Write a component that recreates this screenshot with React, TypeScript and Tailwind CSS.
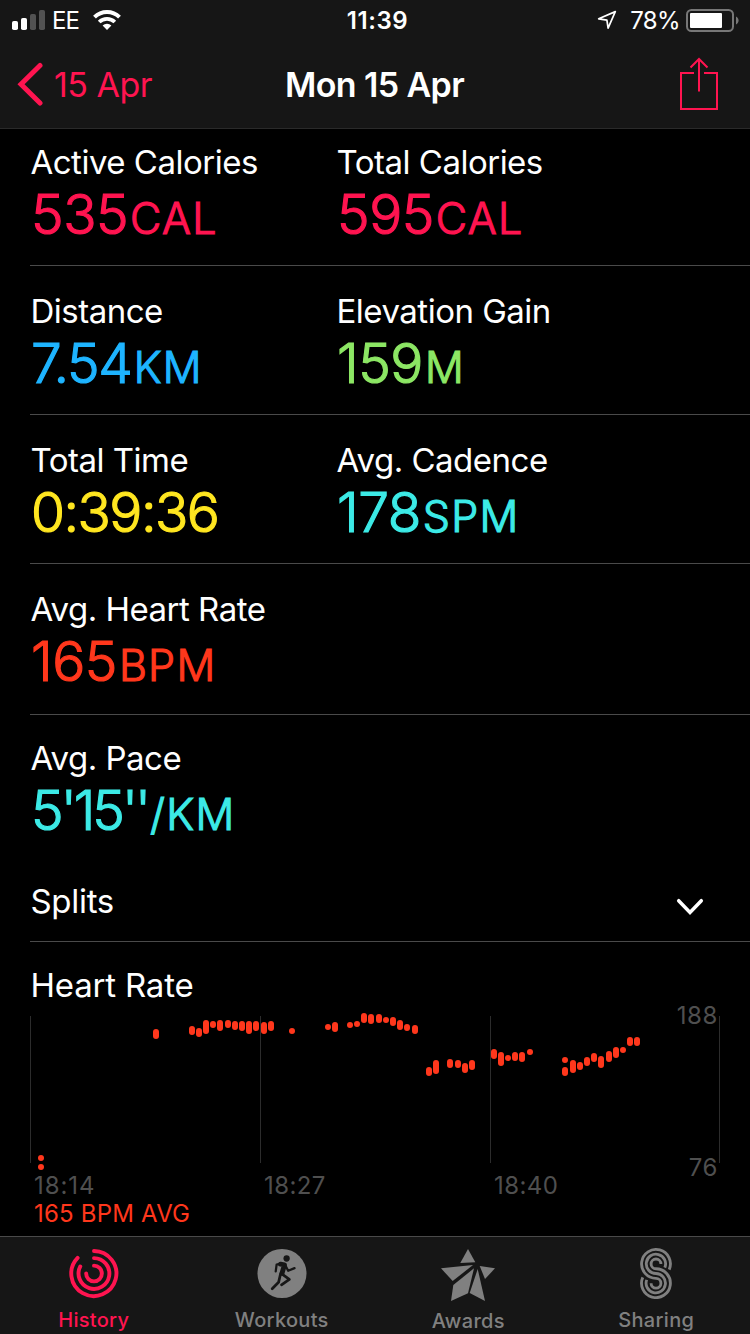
import { type ReactNode } from "react";

type Metric = {
  label: string;
  value: string;
  unit?: string;
  color: string;
  tracking?: string;
};

type Sample = [x: number, top: number, bottom: number];

const metricRows: { className: string; metrics: Metric[] }[] = [
  {
    className: "h-[137px] pt-[13px] border-b",
    metrics: [
      { label: "Active Calories", value: "535", unit: "CAL", color: "text-[#ff1450]" },
      { label: "Total Calories", value: "595", unit: "CAL", color: "text-[#ff1450]" },
    ],
  },
  {
    className: "h-[149px] pt-[25px] border-b",
    metrics: [
      { label: "Distance", value: "7.54", unit: "KM", color: "text-[#1eb4ff]", tracking: "tracking-[-1.3px]" },
      { label: "Elevation Gain", value: "159", unit: "M", color: "text-[#8ce664]" },
    ],
  },
  {
    className: "h-[149px] pt-[25px] border-b",
    metrics: [
      { label: "Total Time", value: "0:39:36", color: "text-[#ffe620]", tracking: "tracking-[-1.5px]" },
      { label: "Avg. Cadence", value: "178", unit: "SPM", color: "text-[#3ceae6]" },
    ],
  },
  {
    className: "h-[151px] pt-[25px] border-b",
    metrics: [{ label: "Avg. Heart Rate", value: "165", unit: "BPM", color: "text-[#ff371c]" }],
  },
  {
    className: "h-[125px] pt-[23px]",
    metrics: [
      { label: "Avg. Pace", value: "5'15''", unit: "/KM", color: "text-[#3ceae6]", tracking: "tracking-[-3px]" },
    ],
  },
];

// x, top and bottom of every range bar
const heartRate: Sample[] = [
  [41, 139, 145], [41, 148, 154], [156, 13, 23], [192, 10, 19], [199, 12, 21],
  [206, 4, 18], [213, 5, 12], [220, 4, 15], [228, 4, 12], [235, 5, 14],
  [242, 5, 15], [249, 5, 18], [256, 5, 15], [264, 6, 18], [271, 5, 15],
  [292, 12, 18], [328, 8, 14], [335, 6, 16], [350, 6, 12], [357, 5, 11],
  [364, -3, 7], [371, -2, 8], [379, -2, 7], [386, 1, 7], [393, 1, 10],
  [400, 4, 14], [407, 8, 15], [415, 9, 18], [429, 51, 60], [436, 44, 58],
  [450, 43, 52], [458, 44, 52], [465, 47, 57], [472, 44, 54], [494, 33, 43],
  [501, 36, 50], [508, 39, 45], [515, 36, 45], [522, 36, 46], [530, 33, 39],
  [565, 41, 47], [565, 51, 60], [573, 44, 57], [580, 46, 54], [587, 41, 50],
  [594, 37, 46], [601, 40, 52], [609, 35, 46], [616, 31, 42], [623, 31, 37],
  [630, 21, 30], [637, 21, 30],
];

const StatusBar = () => (
  <div className="flex h-10 items-center justify-between pl-3 pr-[11px] text-[24px] leading-10">
    <div className="flex flex-1 items-center">
      <svg width="33" height="20" viewBox="0 0 33 20" fill="#fff">
        <rect x="0" y="11" width="6" height="9" rx="1.8" />
        <rect x="9" y="8" width="6" height="12" rx="1.8" />
        <rect x="18" y="4" width="6" height="16" rx="1.8" fill="#525252" />
        <rect x="27" y="0" width="6" height="20" rx="1.8" fill="#525252" />
      </svg>
      <span className="ml-[7px] pt-[2px] tracking-[-0.9px]">EE</span>
      <svg className="ml-[14px]" width="28" height="20" viewBox="0 0 28 20" fill="none" stroke="#fff">
        <path d="M1.5 7.2a17.8 17.8 0 0 1 25 0" strokeWidth="4" />
        <path d="M6.2 12a11.1 11.1 0 0 1 15.6 0" strokeWidth="3.8" />
        <path d="M14 20l-4.4-4.4a6.3 6.3 0 0 1 8.8 0z" fill="#fff" stroke="none" />
      </svg>
    </div>
    <span className="pt-[2px] pl-1 font-semibold tracking-[0.6px]">11:39</span>
    <div className="flex flex-1 items-center justify-end">
      <svg width="20" height="20" viewBox="0 0 20 20" fill="none" stroke="#fff" strokeWidth="1.7" strokeLinejoin="round">
        <path d="M18.3 1.6L1.7 8.8l8.2 1.4 1.2 8z" />
      </svg>
      <span className="ml-[13px] pt-[2px] tracking-[-0.6px]">78%</span>
      <svg className="ml-[6px]" width="53" height="23" viewBox="0 0 53 23">
        <rect x="1" y="1" width="46" height="21" rx="4.5" fill="none" stroke="#777" strokeWidth="2" />
        <rect x="4" y="4" width="32" height="15" rx="1" fill="#fff" />
        <path d="M50 7.5c3.4 1.8 3.4 6.200 0 8z" fill="#777" />
      </svg>
    </div>
  </div>
);

const NavBar = () => (
  <div className="grid h-[88px] grid-cols-3 items-center pl-[17px] pr-[31px] text-[34px]">
    <div className="flex items-center text-[#ff1450]">
      <svg width="27" height="44" viewBox="0 0 27 44" fill="none" stroke="currentColor" strokeWidth="5" strokeLinecap="round">
        <path d="M23 3.500L4 22.200l19 18.800" />
      </svg>
      <span className="ml-[10px] tracking-[-0.5px] whitespace-nowrap">15 Apr</span>
    </div>
    <h1 className="pl-[13px] text-center font-semibold tracking-[-0.6px] whitespace-nowrap">Mon 15 Apr</h1>
    <svg className="justify-self-end text-[#ff1450]" width="40" height="54" viewBox="0 0 40 54" fill="none" stroke="currentColor" strokeWidth="2">
      <path d="M15 16H2v36h36V16H25" />
      <path d="M20 34.500V2M11.500 10.500L20 2l8.500 8.500" />
    </svg>
  </div>
);

const MetricCell = ({ label, value, unit, color, tracking = "tracking-[-0.5px]" }: Metric) => (
  <div className="w-[306px] shrink-0">
    <div className="pl-[0.5px] text-[33px] leading-10 tracking-[-0.5px] whitespace-nowrap">{label}</div>
    <div
      className={`flex h-16 items-baseline pl-px text-[55px] leading-[64px] font-light whitespace-nowrap [stroke-linejoin:round] [-webkit-text-stroke:1.2px_currentColor] ${color}`}
    >
      <span className={tracking}>{value}</span>
      {unit && <span className="ml-[2px] text-[43px] leading-none tracking-[1.3px]">{unit}</span>}
    </div>
  </div>
);

const HeartRateChart = () => (
  <div className="relative">
    <svg className="-ml-[30px] block overflow-visible" width="750" height="156" viewBox="0 0 750 156">
      {[30, 260, 490, 719].map(x => (
        <rect key={x} x={x} y="0" width="1" height="147" fill="#2c2c2c" />
      ))}
      {heartRate.map(([x, top, bottom]) => (
        <rect key={`${x}-${top}`} x={x - 3} y={top} width="6" height={bottom - top} rx="3" fill="#ff371c" />
      ))}
    </svg>
    <span className="absolute -top-[16px] right-[32px] text-[24px] leading-8 tracking-[0.6px] text-[#4f4f4f]">188</span>
    <span className="absolute top-[136px] right-[32px] text-[24px] leading-8 tracking-[0.6px] text-[#4f4f4f]">76</span>
    <div className="flex pl-1 text-[24px] leading-7 text-[#4f4f4f]">
      <span className="w-[230px] tracking-[0.9px]">18:14</span>
      <span className="w-[230px] tracking-[0.4px]">18:27</span>
      <span className="tracking-[0.4px]">18:40</span>
    </div>
    <div className="pl-1 text-[24px] leading-7 tracking-[0.2px] text-[#ff371c]">165 BPM AVG</div>
  </div>
);

const RingsIcon = () => (
  <svg width="50" height="52" viewBox="0 0 50 52" fill="none" stroke="currentColor" strokeWidth="4" strokeLinecap="round">
    <path d="M25 3a23 23 0 1 1-16.700 7" />
    <path d="M25 10.300a15.700 15.700 0 1 1-14 8.500" />
    <path d="M25 18a8 8 0 1 1-8 8" />
  </svg>
);

const RunnerIcon = () => (
  <svg width="50" height="52" viewBox="0 -1 50 52" fill="none" stroke="#161616" strokeWidth="2.300" strokeLinecap="round" strokeLinejoin="round">
    <circle cx="25" cy="25" r="25" fill="#808080" stroke="none" />
    <circle cx="29.700" cy="9.700" r="3.200" fill="#161616" stroke="none" />
    <path d="M23.500 15.500l4 .8-2.500 8.500" strokeWidth="5" />
    <path d="M23.500 15l-4 .9-.9 7M28.500 16.800l2.800 5.400 6.500-2.700" />
    <path d="M25.500 26l7 5-8 5.500" strokeWidth="2.800" />
    <path d="M23.500 25.500l-2 8.500-6.500 6.500" strokeWidth="2.800" />
  </svg>
);

const StarIcon = () => (
  <svg className="overflow-visible" width="54" height="52" viewBox="0 -1 54 52" fill="currentColor">
    <path d="M27 0l7.300 13.300-15 .700z" />
    <path d="M0 19.300L32 16 11.700 32z" />
    <path d="M33 19.300l-6 25L10 52l2.300-16z" />
    <path d="M36.700 20L44 52l-15.300-8z" />
    <path d="M38.700 17l15.300 2.300L44 30z" />
  </svg>
);

const SharingIcon = () => (
  <svg width="34" height="52" viewBox="0 0 34 52" fill="none" stroke="currentColor" strokeWidth="2.900">
    <path d="M30.500 22A14.700 14.700 0 1 0 17 30.900A5 5 0 1 1 12 35.900" />
    <path d="M26 20A9.850 9.850 0 1 0 17 26A9.850 9.850 0 1 1 7.500 32.500" />
    <path d="M22 16.200A5 5 0 1 0 17 21.200A14.700 14.700 0 1 1 3.500 30" />
  </svg>
);

const Tab = ({ label, className, children }: { label: string; className: string; children: ReactNode }) => (
  <button className={`flex w-1/4 flex-col items-center pt-[11px] ${className}`}>
    {children}
    <span className="mt-[7px] text-[20px] leading-7 font-medium tracking-[0.3px]">{label}</span>
  </button>
);

export default function App() {
  return (
    <div className="flex h-[1334px] w-[750px] flex-col overflow-hidden bg-black font-['Inter',sans-serif] text-white">
      <header className="h-[129px] shrink-0 border-b border-[#2a2a2a] bg-[#161616]">
        <StatusBar />
        <NavBar />
      </header>

      <main className="min-h-0 flex-1 pl-[30px]">
        {metricRows.map(row => (
          <section key={row.metrics[0].label} className={`flex border-[#4a4a4a] ${row.className}`}>
            {row.metrics.map(metric => (
              <MetricCell key={metric.label} {...metric} />
            ))}
          </section>
        ))}

        <section className="flex h-[102px] justify-between border-b border-[#4a4a4a] pt-[41px] pr-[45px]">
          <h2 className="pl-[0.5px] text-[33px] leading-10 tracking-[-0.3px]">Splits</h2>
          <svg className="mt-4" width="30" height="20" viewBox="0 0 30 20" fill="none" stroke="#fff" strokeWidth="3.500" strokeLinecap="round">
            <path d="M3.700 3.700L15 15.500 26.300 3.700" />
          </svg>
        </section>

        <section className="pt-[23px]">
          <h2 className="mb-[11px] pl-[0.5px] text-[33px] leading-10 tracking-[-0.2px]">Heart Rate</h2>
          <HeartRateChart />
        </section>
      </main>

      <nav className="flex h-[98px] shrink-0 border-t border-[#4a4a4a] bg-[#161616]">
        <Tab label="History" className="text-[#ff1450]">
          <RingsIcon />
        </Tab>
        <Tab label="Workouts" className="pl-px text-[#808080]">
          <RunnerIcon />
        </Tab>
        <Tab label="Awards" className="pr-px text-[#808080]">
          <StarIcon />
        </Tab>
        <Tab label="Sharing" className="text-[#808080]">
          <SharingIcon />
        </Tab>
      </nav>
    </div>
  );
}
